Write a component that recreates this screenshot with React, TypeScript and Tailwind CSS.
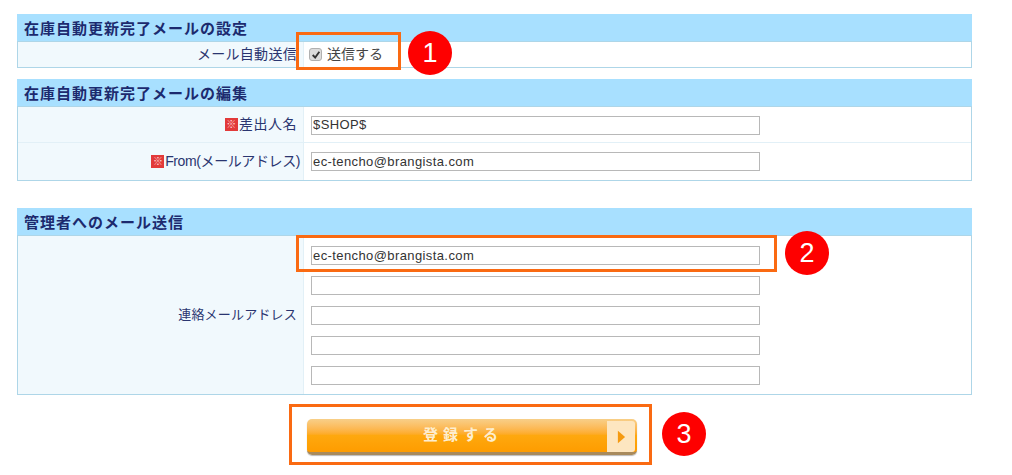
import { ReactNode } from 'react';

const FONT = "font-['Liberation_Sans','Noto_Sans_CJK_JP',sans-serif]";

function Panel({ title, className, children }: { title: string; className?: string; children: ReactNode }) {
  return (
    <section className={`border border-[#aed6e8] ${className ?? ''}`}>
      <h2 className="h-[28px] -mx-px -mt-px bg-[#a8e0ff] border-b border-[#aed6e8] pl-[7px] pt-[3px] text-[15px] tracking-[1px] leading-[24px] font-bold text-[#1c2a6e]">
        {title}
      </h2>
      {children}
    </section>
  );
}

function Required() {
  return (
    <span className="inline-flex items-center justify-center w-[13px] h-[13px] bg-[#e23a3a] text-[#ffd9d9] text-[10px] leading-none mr-[1px]">
      ※
    </span>
  );
}

function Row({ label, labelClass, required, last, children }: { label: string; labelClass?: string; required?: boolean; last?: boolean; children: ReactNode }) {
  return (
    <div className={`flex ${last ? 'h-[37px]' : 'h-[36px] border-b border-[#e2f0f7]'}`}>
      <div className={`w-[286px] shrink-0 bg-[#f1f9fd] border-r border-[#e2f0f7] flex items-center justify-end text-[14px] text-[#2a3570] ${labelClass ?? ''}`}>
        {required && <Required />}
        {label}
      </div>
      <div className={`flex-1 flex items-center pl-[7px] ${last ? '' : 'pt-[1px]'}`}>{children}</div>
    </div>
  );
}

function TextBox({ value }: { value?: string }) {
  return (
    <input
      readOnly
      value={value ?? ''}
      className="block w-[449px] h-[19px] bg-white border border-[#b8b8b8] pl-[1px] text-[13px] tracking-[0.4px] text-[#333] outline-none"
    />
  );
}

function Callout({ num, className }: { num: number; className: string }) {
  return (
    <span className={`absolute w-[44px] h-[44px] rounded-full bg-[#fe0000] text-white text-[27px] flex items-center justify-center font-['Liberation_Sans',sans-serif] ${className}`}>
      {num}
    </span>
  );
}

export default function App() {
  return (
    <div className={`relative w-[1012px] h-[475px] bg-white overflow-hidden pt-[14px] pl-[17px] ${FONT}`}>
      <div className="w-[955px]">
        <Panel title="在庫自動更新完了メールの設定">
          <div className="flex h-[25px]">
            <div className="w-[286px] shrink-0 bg-[#f1f9fd] border-r border-[#e2f0f7] flex items-center justify-end pr-[6px] text-[14px] tracking-[0.3px] text-[#2a3570]">
              メール自動送信
            </div>
            <label className="flex items-center pl-[5px] text-[14px] text-[#444]">
              <span className="w-[13px] h-[13px] rounded-[3px] bg-[#dcdcdc] border border-[#b0b0b0] flex items-center justify-center mr-[5px]">
                <svg viewBox="0 0 12 12" className="w-[10px] h-[10px]">
                  <path d="M2 6l3 3 5-7" fill="none" stroke="#333" strokeWidth="2.2" />
                </svg>
              </span>
              送信する
            </label>
          </div>
        </Panel>

        <Panel title="在庫自動更新完了メールの編集" className="mt-[11px]">
          <Row label="差出人名" labelClass="pr-[6px] tracking-[0.5px]" required>
            <TextBox value="$SHOP$" />
          </Row>
          <Row label="From(メールアドレス)" labelClass="pr-[3px] tracking-[-0.4px]" required last>
            <TextBox value="ec-tencho@brangista.com" />
          </Row>
        </Panel>

        <Panel title="管理者へのメール送信" className="mt-[27px]">
          <div className="flex h-[158px]">
            <div className="w-[286px] shrink-0 bg-[#f1f9fd] border-r border-[#e2f0f7] flex items-center justify-end pr-[6px] text-[13px] tracking-[0.2px] text-[#2a3570]">
              連絡メールアドレス
            </div>
            <div className="flex-1 flex flex-col gap-[11px] pl-[7px] pt-[10px]">
              <TextBox value="ec-tencho@brangista.com" />
              <TextBox />
              <TextBox />
              <TextBox />
              <TextBox />
            </div>
          </div>
        </Panel>

        <div className="pl-[290px] mt-[24px]">
          <button className="relative block w-[330px] h-[36px] pr-[18px] rounded-[5px] bg-gradient-to-b from-[#f8cf88] via-[#fea80e] to-[#fe9c00] border-b-[3px] border-[#a88a5c] shadow-[0_1px_1px_#bbb] text-[#fdeed0] font-bold text-[15px] tracking-[5px]">
            登録する
            <span className="absolute right-[2px] top-[2px] bottom-0 w-[28px] bg-[#fde6c0] rounded-r-[3px] flex items-center justify-center">
              <svg viewBox="0 0 10 14" className="w-[9px] h-[14px]">
                <path d="M1 0l8 7-8 7z" fill="#f59a10" />
              </svg>
            </span>
          </button>
        </div>
      </div>

      <span className="absolute left-[296px] top-[32px] w-[105px] h-[38px] border-[3px] border-[#fa6a12]" />
      <span className="absolute left-[296px] top-[235px] w-[481px] h-[37px] border-[3px] border-[#fa6a12]" />
      <span className="absolute left-[289px] top-[404px] w-[363px] h-[61px] border-[3px] border-[#fa6a12]" />
      <Callout num={1} className="left-[408px] top-[31px]" />
      <Callout num={2} className="left-[785px] top-[231px]" />
      <Callout num={3} className="left-[662px] top-[412px]" />
    </div>
  );
}
